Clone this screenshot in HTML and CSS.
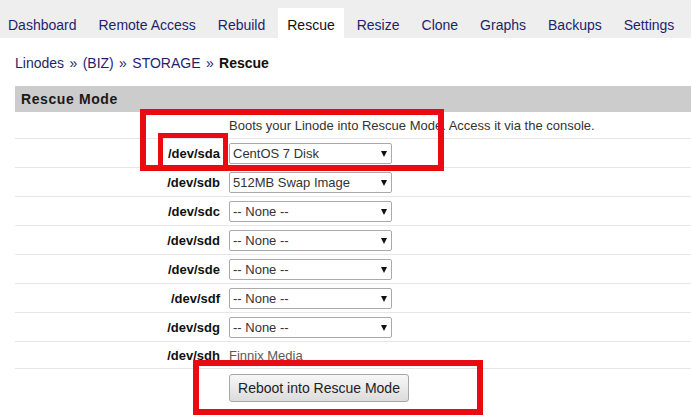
FILE: index.html
```html
<!DOCTYPE html>
<html>
<head>
<meta charset="utf-8">
<link rel="stylesheet" href="styles.css">
</head>
<body>
<nav class="tabs">
  <a class="tab">Dashboard</a>
  <a class="tab">Remote Access</a>
  <a class="tab">Rebuild</a>
  <a class="tab active">Rescue</a>
  <a class="tab">Resize</a>
  <a class="tab">Clone</a>
  <a class="tab">Graphs</a>
  <a class="tab">Backups</a>
  <a class="tab">Settings</a>
</nav>
<main class="content">
  <div class="crumbs"><a>Linodes</a> » <a>(BIZ)</a> » <a>STORAGE</a> » <b>Rescue</b></div>
  <div class="panel">
    <div class="panel-head">Rescue Mode</div>
    <div class="row desc"><span class="label"></span><span class="value">Boots your Linode into Rescue Mode. Access it via the console.</span></div>
    <div class="row"><span class="label">/dev/sda</span><span class="value"><span class="sel"><select><option>CentOS 7 Disk</option></select></span></span></div>
    <div class="row"><span class="label">/dev/sdb</span><span class="value"><span class="sel"><select><option>512MB Swap Image</option></select></span></span></div>
    <div class="row"><span class="label">/dev/sdc</span><span class="value"><span class="sel"><select><option>-- None --</option></select></span></span></div>
    <div class="row"><span class="label">/dev/sdd</span><span class="value"><span class="sel"><select><option>-- None --</option></select></span></span></div>
    <div class="row"><span class="label">/dev/sde</span><span class="value"><span class="sel"><select><option>-- None --</option></select></span></span></div>
    <div class="row"><span class="label">/dev/sdf</span><span class="value"><span class="sel"><select><option>-- None --</option></select></span></span></div>
    <div class="row"><span class="label">/dev/sdg</span><span class="value"><span class="sel"><select><option>-- None --</option></select></span></span></div>
    <div class="row finnix"><span class="label">/dev/sdh</span><span class="value muted">Finnix Media</span></div>
    <div class="row actions"><span class="label"></span><span class="value"><button class="btn">Reboot into Rescue Mode</button></span></div>
  </div>
</main>
<div class="mark mark-a"></div>
<div class="mark mark-b"></div>
<div class="mark mark-c"></div>
</body>
</html>
```
FILE: styles.css
```css
html, body {
  margin: 0;
  padding: 0;
  background: #fff;
  font-family: "Liberation Sans", Arial, sans-serif;
  color: #222;
}
.tabs {
  display: flex;
  align-items: flex-end;
  gap: 3px;
  height: 38px;
  background: #eeeeee;
  margin-left: -1.5px;
}
.tab {
  display: block;
  height: 28px;
  padding: 2px 9.5px 0 9.5px;
  line-height: 30px;
  font-size: 14px;
  color: #1f1f6c;
}
.tab.active {
  background: #fff;
  color: #111;
}
.content {
  padding-left: 15px;
}
.crumbs {
  margin-top: 16px;
  line-height: 18px;
  font-size: 14px;
  color: #1f1f6c;
  word-spacing: 1.5px;
}
.crumbs b {
  color: #111;
}
.panel {
  margin-top: 14px;
}
.panel-head {
  background: #cccccc;
  height: 26px;
  line-height: 26px;
  padding-left: 6px;
  font-weight: bold;
  font-size: 14px;
  letter-spacing: 0.6px;
  color: #1a1a1a;
}
.row {
  display: grid;
  grid-template-columns: 214px 1fr;
  align-items: center;
  height: 28px;
  border-bottom: 1px solid #e6e6e6;
  font-size: 13px;
}
.row.desc {
  height: 25px;
  padding-top: 1px;
  box-sizing: content-box;
}
.row.finnix {
  height: 26px;
}
.row.actions {
  height: 41px;
  border-bottom: none;
  align-items: start;
}
.label {
  text-align: right;
  padding-right: 9px;
  font-weight: bold;
  color: #111;
}
.value {
  color: #333;
}
.value.muted {
  color: #5a5a5a;
}
.sel {
  position: relative;
  display: inline-block;
  vertical-align: middle;
}
.sel select {
  appearance: none;
  -webkit-appearance: none;
  width: 163px;
  height: 21px;
  margin: 0;
  padding: 0 0 0 3px;
  border: 1px solid #aaaaaa;
  border-radius: 2px;
  background: #fff;
  font-family: "Liberation Sans", Arial, sans-serif;
  font-size: 13px;
  color: #333;
  display: block;
}
.sel::after {
  content: "";
  position: absolute;
  right: 5px;
  top: 8px;
  border-left: 3.5px solid transparent;
  border-right: 3.5px solid transparent;
  border-top: 6px solid #111;
  pointer-events: none;
}
.btn {
  margin-top: 5px;
  width: 180px;
  height: 28px;
  padding: 0;
  border: 1px solid #a8a8a8;
  border-radius: 3px;
  background: linear-gradient(#f7f7f7, #dcdcdc);
  font-family: "Liberation Sans", Arial, sans-serif;
  font-size: 14px;
  color: #222;
}
.mark {
  position: absolute;
  border: 6px solid #ea0a12;
  box-sizing: border-box;
}
.mark-a {
  left: 140px;
  top: 109px;
  width: 304px;
  height: 62px;
}
.mark-b {
  left: 158px;
  top: 133px;
  width: 70px;
  height: 38px;
  border-width: 5px;
}
.mark-c {
  left: 193px;
  top: 360px;
  width: 290px;
  height: 55px;
}
```
